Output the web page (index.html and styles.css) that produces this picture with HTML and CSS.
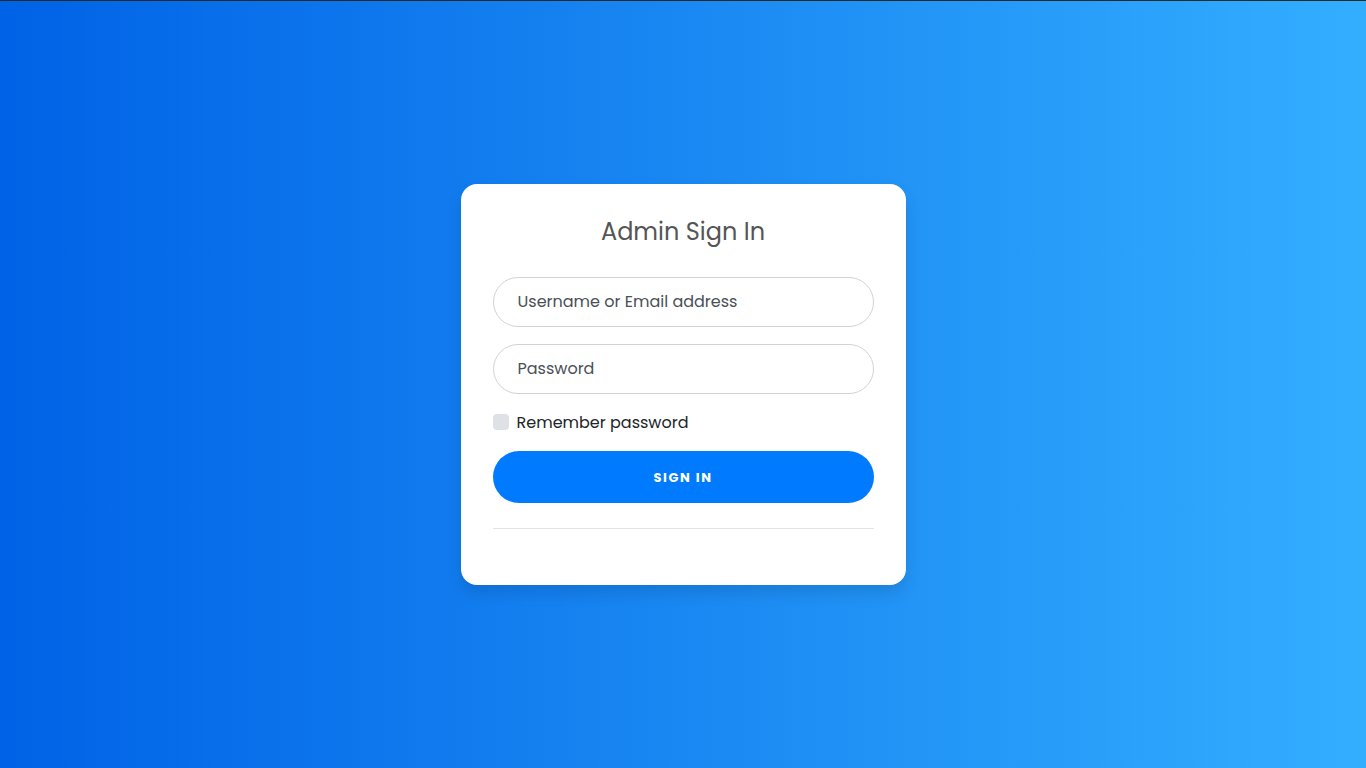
FILE: index.html
```html
<!DOCTYPE html>
<html lang="en">
<head>
<meta charset="utf-8">
<title>Admin Sign In</title>
<link rel="stylesheet" href="styles.css">
</head>
<body>
<main class="page">
  <div class="card">
    <h5 class="card-title">Admin Sign In</h5>
    <form class="form">
      <div class="field">
        <input class="input" type="text" placeholder="Username or Email address">
      </div>
      <div class="field">
        <input class="input" type="password" placeholder="Password">
      </div>
      <label class="check">
        <span class="check-box"></span>
        <span class="check-label">Remember password</span>
      </label>
      <button class="btn" type="button">Sign in</button>
      <hr class="divider">
    </form>
  </div>
</main>
</body>
</html>
```

FILE: styles.css
```css
* { box-sizing: border-box; }
html, body { margin: 0; padding: 0; height: 100%; }
body {
  font-family: "Poppins", "Inter", "Open Sans", sans-serif;
  border-top: 1px solid #2a2a2a;
  background: linear-gradient(to right, #0062e6, #33aeff);
}
.page {
  height: 767px;
  display: flex;
  align-items: center;
  justify-content: center;
}
.card {
  width: 445px;
  background: #fff;
  border-radius: 16px;
  box-shadow: 0 8px 16px rgba(0, 0, 0, 0.12);
  padding: 33px 32px 56px;
}
.card-title {
  margin: 0 0 31px;
  text-align: center;
  font-size: 24px;
  font-weight: 400;
  line-height: 29px;
  color: #555;
}
.form { display: flex; flex-direction: column; }
.field { margin-bottom: 17px; }
.input {
  display: block;
  width: 100%;
  height: 50px;
  border: 1px solid #ced4da;
  border-radius: 25px;
  padding: 0 24px 2px;
  font-family: inherit;
  font-size: 16px;
  color: #495057;
  background: #fff;
  outline: none;
}
.input::placeholder { color: #495057; opacity: 1; }
.check {
  display: flex;
  align-items: center;
  gap: 8px;
  height: 24px;
  margin: -1px 0 17px;
}
.check-box {
  width: 16px;
  height: 16px;
  border-radius: 4px;
  background: #dee2e6;
}
.check-label {
  font-size: 16px;
  color: #212529;
}
.btn {
  height: 52px;
  border: none;
  border-radius: 26px;
  padding-top: 2px;
  background: #007bff;
  color: #fff;
  font-family: inherit;
  font-size: 13px;
  font-weight: 700;
  letter-spacing: 1.6px;
  text-transform: uppercase;
}
.divider {
  margin: 25px 0 0;
  border: 0;
  border-top: 1px solid #e3e3e3;
}
```
